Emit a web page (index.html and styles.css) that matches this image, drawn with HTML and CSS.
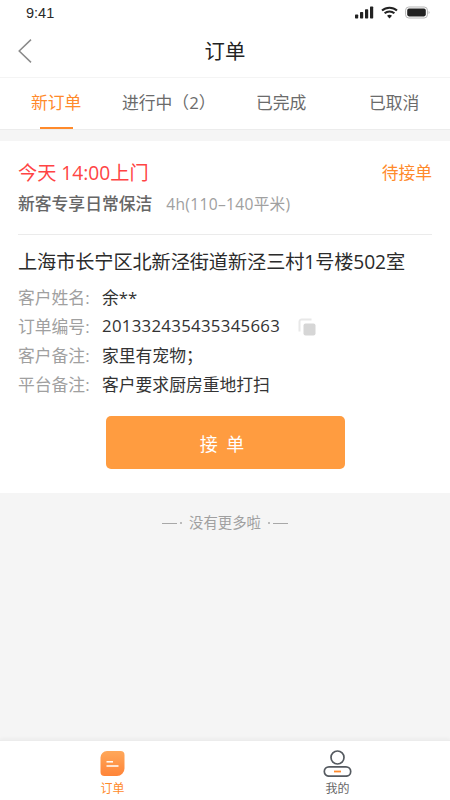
FILE: index.html
```html
<!DOCTYPE html>
<html lang="zh-CN">
<head>
<meta charset="utf-8">
<title>订单</title>
<link rel="stylesheet" href="styles.css">
</head>
<body>
<div class="app">
  <header class="top">
    <div class="status">
      <span class="time">9:41</span>
      <span class="status-icons">
        <svg width="19" height="13" viewBox="0 0 19 13"><g fill="#222"><rect x="0" y="8.5" width="3.2" height="4" rx=".7"/><rect x="5" y="6" width="3.2" height="6.5" rx=".7"/><rect x="10" y="3.2" width="3.2" height="9.3" rx=".7"/><rect x="15" y="0.5" width="3.2" height="12" rx=".7"/></g></svg>
        <svg width="17" height="13" viewBox="0 0 17 13"><path d="M1 4.6C5.2.7 11.8.7 16 4.6M3.6 7.3c2.8-2.5 7-2.5 9.8 0" fill="none" stroke="#222" stroke-width="2"/><path d="M6 9.8c1.5-1.3 3.5-1.3 5 0l-2.5 2.7z" fill="#222"/></svg>
        <svg width="25" height="13" viewBox="0 0 25 13"><rect x=".6" y="1" width="21.8" height="11" rx="3.2" fill="none" stroke="#b5b5b5" stroke-width="1"/><rect x="2.2" y="2.6" width="18.6" height="7.8" rx="1.8" fill="#222"/><path d="M23.6 5v3c.7-.3 1-.9 1-1.5s-.3-1.200-1-1.500z" fill="#b5b5b5"/></svg>
      </span>
    </div>
    <div class="nav">
      <svg class="back" width="14" height="24" viewBox="0 0 14 24"><path d="M13 .6 1.200 12 13 23.400" fill="none" stroke="#8a8a8a" stroke-width="1.500"/></svg>
      <h1 class="title">订单</h1>
    </div>
  </header>

  <nav class="tabs">
    <span class="tab tab-active">新订单</span>
    <span class="tab tab-progress">进行中（2）</span>
    <span class="tab tab-done">已完成</span>
    <span class="tab tab-cancel">已取消</span>
  </nav>

  <main class="content">
    <section class="card">
      <div class="row-head">
        <span class="when">今天 14:00上门</span>
        <span class="state">待接单</span>
      </div>
      <div class="service">
        <span class="service-name">新客专享日常保洁</span>
        <span class="service-spec">4h(110–140平米)</span>
      </div>
      <div class="rule"></div>
      <div class="address">上海市长宁区北新泾街道新泾三村1号楼502室</div>
      <dl class="info">
        <div class="info-row"><dt>客户姓名:</dt><dd>余**</dd></div>
        <div class="info-row"><dt>订单编号:</dt><dd class="order-no">201332435435345663</dd>
          <svg class="copy" width="18" height="18" viewBox="0 0 18 18"><path d="M1.500 13.500V3.500a2 2 0 0 1 2-2h10" fill="none" stroke="#e8e8e8" stroke-width="2"/><rect x="5.500" y="5.500" width="12" height="12" rx="2" fill="#d6d6d6"/></svg>
        </div>
        <div class="info-row"><dt>客户备注:</dt><dd>家里有宠物；</dd></div>
        <div class="info-row"><dt>平台备注:</dt><dd>客户要求厨房重地打扫</dd></div>
      </dl>
      <button class="accept" type="button">接 单</button>
    </section>
    <div class="end-note">
      <span class="dash"></span><span class="dot"></span>
      <span class="end-text">没有更多啦</span>
      <span class="dot"></span><span class="dash"></span>
    </div>
  </main>

  <footer class="tabbar">
    <div class="bar-item bar-active">
      <svg width="25" height="26" viewBox="0 0 25 26"><defs><linearGradient id="g" x1="0" y1="0" x2="0" y2="1"><stop offset="0" stop-color="#ffa85a"/><stop offset="1" stop-color="#ff8438"/></linearGradient></defs><path d="M7 .5h13.500a4 4 0 0 1 4 4V18a7.500 7.500 0 0 1-7.500 7.500H4.500a4 4 0 0 1-4-4V7A6.500 6.500 0 0 1 7 .5z" fill="url(#g)"/><path d="M6.500 11.300h6.500" stroke="#fff" stroke-width="1.500"/><path d="M6.500 15.500h12" stroke="#fff" stroke-width="1.500"/></svg>
      <span>订单</span>
    </div>
    <div class="bar-item">
      <svg width="29" height="27" viewBox="0 0 29 27"><circle cx="14.500" cy="7.500" r="6.500" fill="none" stroke="#555a60" stroke-width="1.700"/><rect x="1.300" y="16.800" width="26.400" height="9.400" rx="4.700" fill="none" stroke="#555a60" stroke-width="1.700"/><path d="M11 21.500h7" stroke="#ff8a2b" stroke-width="1.800"/></svg>
      <span>我的</span>
    </div>
  </footer>
</div>
</body>
</html>
```
FILE: styles.css
```css
* { box-sizing: border-box; }
html, body { margin: 0; padding: 0; }
body {
  width: 450px;
  height: 800px;
  overflow: hidden;
  background: #fff;
  font-family: "Open Sans", "Noto Sans CJK SC", "Noto Sans", sans-serif;
  color: #2b2b2b;
}
.app { display: flex; flex-direction: column; height: 800px; }

.top { height: 78px; border-bottom: 1px solid #f4f4f4; flex: none; }
.status { height: 27px; display: flex; align-items: center; justify-content: space-between; padding: 0 20px 2px 26px; }
.time { font-family: "Liberation Sans", sans-serif; font-size: 14.500px; color: #2a2a2a; }
.status-icons { display: flex; align-items: center; gap: 7px; }
.nav { height: 50px; display: flex; align-items: center; justify-content: center; position: relative; padding-bottom: 2px; }
.back { position: absolute; left: 18px; top: 12px; }
.title { margin: 0; font-size: 20.400px; font-weight: 400; line-height: 48px; color: #222; }

.tabs { height: 52px; flex: none; display: flex; position: relative; border-bottom: 1px solid #ececec; font-size: 16.800px; line-height: 50px; color: #6b6b6b; }
.tab { position: absolute; top: 0; height: 52px; white-space: nowrap; }
.tab-active { left: 31px; color: #ff8a2b; }
.tab-active::after { content: ""; position: absolute; left: 9px; bottom: 1px; width: 33px; height: 2px; background: #ff8a2b; }
.tab-progress { left: 122px; }
.tab-done { left: 256px; }
.tab-cancel { left: 369px; }

.content { flex: 1; background: #f5f5f5; padding-top: 11px; }
.card { background: #fff; height: 352px; padding: 18px 18px 0; display: flex; flex-direction: column; }
.row-head { display: flex; justify-content: space-between; align-items: center; height: 26px; }
.when { font-size: 19.200px; color: #ff4444; }
.state { font-size: 16.800px; color: #ff8a2b; }
.service { margin-top: 5px; height: 26px; display: flex; align-items: center; gap: 14px; font-size: 16.800px; }
.service-name { color: #666; font-weight: 500; }
.service-spec { color: #a0a0a0; font-size: 15.600px; letter-spacing: .3px; }
.rule { margin-top: 18px; height: 1px; background: #ebebeb; }
.address { margin-top: 12px; font-size: 19.200px; line-height: 29px; color: #2b2b2b; white-space: nowrap; letter-spacing: -.1px; }
.info { margin: 6px 0 0; font-size: 16.800px; }
.info-row { display: flex; align-items: center; height: 29px; }
.info-row dt { width: 84px; color: #a0a0a0; }
.info-row dd { margin: 0; color: #333; }
.order-no { letter-spacing: .3px; }
.copy { margin-left: 18px; margin-top: 3px; }
.accept {
  align-self: center;
  margin-top: 18px;
  width: 239px;
  height: 53px;
  padding: 0 4px 0 0;
  border: 0;
  border-radius: 5px;
  background: #ff9c40;
  color: #fff;
  font-family: inherit;
  font-size: 18px;
  letter-spacing: 2px;
}

.end-note { margin-top: 18px; display: flex; align-items: center; justify-content: center; color: #a0a0a0; font-size: 14.400px; line-height: 24px; }
.end-text { margin: 0 4px; }
.dash { width: 15px; height: 1px; background: #a8a8a8; }
.dot { width: 2px; height: 2px; border-radius: 50%; background: #a8a8a8; margin: 0 3px; }

.tabbar { height: 60px; flex: none; display: grid; grid-template-columns: 1fr 1fr; background: #fff; border-top: 1px solid #ececec; box-shadow: 0 -2px 3px rgba(0, 0, 0, .03); }
.bar-item { display: flex; flex-direction: column; align-items: center; justify-content: flex-start; padding-top: 9px; font-size: 12px; line-height: 16px; color: #666; }
.bar-item svg { height: 27px; margin-bottom: 4px; }
.bar-active { color: #ff8a2b; }
```
